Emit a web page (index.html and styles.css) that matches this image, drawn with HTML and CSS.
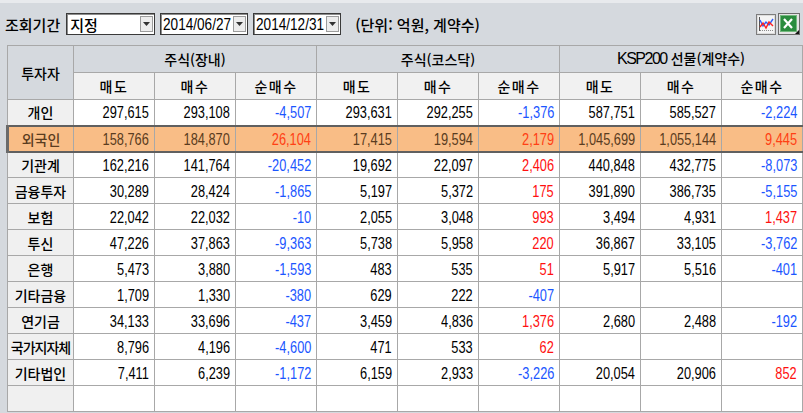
FILE: index.html
```html
<!DOCTYPE html>
<html lang="ko">
<head>
<meta charset="utf-8">
<link rel="stylesheet" href="styles.css">
</head>
<body>
<div class="toolbar">
  <span class="label">조회기간</span>
  <div class="combo sel"><span class="val">지정</span><span class="btn"><svg width="9" height="6" viewBox="0 0 9 6"><path d="M1 1h7L4.5 5z" fill="#333"/></svg></span></div>
  <div class="combo date"><span class="val"><span class="v">2014/06/27</span></span><span class="btn"><svg width="9" height="6" viewBox="0 0 9 6"><path d="M1 1h7L4.5 5z" fill="#333"/></svg></span></div>
  <div class="combo date"><span class="val"><span class="v">2014/12/31</span></span><span class="btn"><svg width="9" height="6" viewBox="0 0 9 6"><path d="M1 1h7L4.5 5z" fill="#333"/></svg></span></div>
  <span class="unit">(단위: 억원, 계약수)</span>
  <div class="icons">
    <span class="icon chart"><svg width="20" height="21" viewBox="0 0 20 21">
      <rect x="0.5" y="0.5" width="19" height="20" fill="#dcdcdc" stroke="#7d7d7d"/>
      <rect x="2" y="2" width="16" height="17" fill="#f4f4f4"/>
      <path d="M3.5 3v14" stroke="#555" stroke-width="1"/>
      <path d="M4 16.5h13" stroke="#8a8a8a" stroke-width="1" stroke-dasharray="1 1"/>
      <path d="M4 6l3 6 3-4 3 3 4-6" fill="none" stroke="#2b5cff" stroke-width="1.4"/>
      <path d="M4 13l3-4 3 5 3-6 4 4" fill="none" stroke="#ff2020" stroke-width="1.4"/>
    </svg></span>
    <span class="icon excel"><svg width="22" height="22" viewBox="0 0 22 22">
      <rect x="0.5" y="0.5" width="21" height="21" fill="#e4e4e4" stroke="#6c6c6c"/>
      <rect x="2.5" y="2.5" width="16" height="16" fill="#2a8c3e" stroke="#73b97e"/>
      <path d="M6 6l8 9M14 6l-8 9" stroke="#fff" stroke-width="2.2"/>
      <path d="M21 17v4h-4z" fill="#111"/>
    </svg></span>
  </div>
</div>
<table class="grid">
  <colgroup><col class="c0"><col><col><col><col><col><col><col><col><col></colgroup>
  <thead>
    <tr class="h1"><th rowspan="2" class="inv">투자자</th><th colspan="3">주식(장내)</th><th colspan="3">주식(코스닥)</th><th colspan="3"><span class="v">KSP200</span> 선물(계약수)</th></tr>
    <tr class="h2"><th>매도</th><th>매수</th><th>순매수</th><th>매도</th><th>매수</th><th>순매수</th><th>매도</th><th>매수</th><th>순매수</th></tr>
  </thead>
  <tbody>
    <tr><th>개인</th><td><span class="v">297,615</span></td><td><span class="v">293,108</span></td><td class="neg"><span class="v">-4,507</span></td><td><span class="v">293,631</span></td><td><span class="v">292,255</span></td><td class="neg"><span class="v">-1,376</span></td><td><span class="v">587,751</span></td><td><span class="v">585,527</span></td><td class="neg"><span class="v">-2,224</span></td></tr>
    <tr class="hl"><th>외국인</th><td><span class="v">158,766</span></td><td><span class="v">184,870</span></td><td class="pos"><span class="v">26,104</span></td><td><span class="v">17,415</span></td><td><span class="v">19,594</span></td><td class="pos"><span class="v">2,179</span></td><td><span class="v">1,045,699</span></td><td><span class="v">1,055,144</span></td><td class="pos"><span class="v">9,445</span></td></tr>
    <tr><th>기관계</th><td><span class="v">162,216</span></td><td><span class="v">141,764</span></td><td class="neg"><span class="v">-20,452</span></td><td><span class="v">19,692</span></td><td><span class="v">22,097</span></td><td class="pos"><span class="v">2,406</span></td><td><span class="v">440,848</span></td><td><span class="v">432,775</span></td><td class="neg"><span class="v">-8,073</span></td></tr>
    <tr><th>금융투자</th><td><span class="v">30,289</span></td><td><span class="v">28,424</span></td><td class="neg"><span class="v">-1,865</span></td><td><span class="v">5,197</span></td><td><span class="v">5,372</span></td><td class="pos"><span class="v">175</span></td><td><span class="v">391,890</span></td><td><span class="v">386,735</span></td><td class="neg"><span class="v">-5,155</span></td></tr>
    <tr><th>보험</th><td><span class="v">22,042</span></td><td><span class="v">22,032</span></td><td class="neg"><span class="v">-10</span></td><td><span class="v">2,055</span></td><td><span class="v">3,048</span></td><td class="pos"><span class="v">993</span></td><td><span class="v">3,494</span></td><td><span class="v">4,931</span></td><td class="pos"><span class="v">1,437</span></td></tr>
    <tr><th>투신</th><td><span class="v">47,226</span></td><td><span class="v">37,863</span></td><td class="neg"><span class="v">-9,363</span></td><td><span class="v">5,738</span></td><td><span class="v">5,958</span></td><td class="pos"><span class="v">220</span></td><td><span class="v">36,867</span></td><td><span class="v">33,105</span></td><td class="neg"><span class="v">-3,762</span></td></tr>
    <tr><th>은행</th><td><span class="v">5,473</span></td><td><span class="v">3,880</span></td><td class="neg"><span class="v">-1,593</span></td><td><span class="v">483</span></td><td><span class="v">535</span></td><td class="pos"><span class="v">51</span></td><td><span class="v">5,917</span></td><td><span class="v">5,516</span></td><td class="neg"><span class="v">-401</span></td></tr>
    <tr><th>기타금융</th><td><span class="v">1,709</span></td><td><span class="v">1,330</span></td><td class="neg"><span class="v">-380</span></td><td><span class="v">629</span></td><td><span class="v">222</span></td><td class="neg"><span class="v">-407</span></td><td></td><td></td><td></td></tr>
    <tr><th>연기금</th><td><span class="v">34,133</span></td><td><span class="v">33,696</span></td><td class="neg"><span class="v">-437</span></td><td><span class="v">3,459</span></td><td><span class="v">4,836</span></td><td class="pos"><span class="v">1,376</span></td><td><span class="v">2,680</span></td><td><span class="v">2,488</span></td><td class="neg"><span class="v">-192</span></td></tr>
    <tr><th class="tight">국가지자체</th><td><span class="v">8,796</span></td><td><span class="v">4,196</span></td><td class="neg"><span class="v">-4,600</span></td><td><span class="v">471</span></td><td><span class="v">533</span></td><td class="pos"><span class="v">62</span></td><td></td><td></td><td></td></tr>
    <tr><th>기타법인</th><td><span class="v">7,411</span></td><td><span class="v">6,239</span></td><td class="neg"><span class="v">-1,172</span></td><td><span class="v">6,159</span></td><td><span class="v">2,933</span></td><td class="neg"><span class="v">-3,226</span></td><td><span class="v">20,054</span></td><td><span class="v">20,906</span></td><td class="pos"><span class="v">852</span></td></tr>
    <tr><th></th><td></td><td></td><td></td><td></td><td></td><td></td><td></td><td></td><td></td></tr>
  </tbody>
</table>
</body>
</html>
```

FILE: styles.css
```css
html, body {
  margin: 0;
  padding: 0;
}
body {
  width: 803px;
  height: 413px;
  overflow: hidden;
  background: #d5d9de;
  font-family: "Noto Sans CJK KR", "Liberation Sans", sans-serif;
  color: #000;
}
.v {
  display: inline-block;
  font-family: "Liberation Sans", sans-serif;
  transform: scaleX(0.8);
  transform-origin: 100% 50%;
}
.toolbar {
  height: 45px;
  box-sizing: border-box;
  padding: 3px 3px 0 5px;
  display: flex;
  align-items: center;
  background: linear-gradient(#e8eaed 0, #e8eaed 3px, #d5d9de 3px);
}
.label {
  font-size: 15px;
  font-weight: 500;
  margin-right: 6px;
  line-height: 1;
}
.combo {
  display: flex;
  flex: none;
  align-items: center;
  height: 22px;
  box-sizing: border-box;
  border: 1px solid #3a3a3a;
  box-shadow: inset 1px 1px 0 #8c8c8c;
  background: #fff;
}
.combo.sel { width: 89px; }
.combo.date { width: 88px; margin-left: 5px; }
.combo .val {
  flex: 1;
  min-width: 0;
  padding-left: 3px;
  font-size: 15px;
  font-weight: 500;
  line-height: 1;
  white-space: nowrap;
}
.combo .val .v {
  font-size: 17px;
  font-weight: normal;
  transform-origin: 0 50%;
  margin-left: -1px;
  margin-right: -17px;
}
.combo .btn {
  flex: none;
  width: 13px;
  height: 16px;
  margin-right: 1px;
  box-sizing: border-box;
  border: 1px solid #9c9c9c;
  background: #ededed;
  display: flex;
  align-items: center;
  justify-content: center;
}
.unit {
  margin-left: 14px;
  font-size: 15px;
  font-weight: 500;
  line-height: 1;
}
.icons {
  margin-left: auto;
  display: flex;
  align-items: center;
  gap: 2px;
}
.icon { display: block; line-height: 0; }

.grid {
  margin-left: 6px;
  border-collapse: collapse;
  table-layout: fixed;
  width: 796px;
  border: 1px solid #8a8a8a;
}
.grid col { width: 81px; }
.grid col.c0 { width: 66px; }
.grid th, .grid td {
  border: 1px solid #a8a8a8;
  padding: 0 5px 0 0;
  overflow: hidden;
  white-space: nowrap;
}
.grid th {
  font-weight: 500;
  font-size: 14px;
  text-align: center;
  padding: 0;
  background: #f0f0f0;
  line-height: 1;
}
.grid th .v {
  font-size: 16px;
  font-weight: normal;
  transform: none;
  letter-spacing: -1.5px;
}
.grid thead tr { height: 27px; }
.grid tbody tr { height: 26px; }
.grid .h1 th {
  background: #d5d9de;
}
.grid .h2 th {
  background: #f1f1f1;
  letter-spacing: 1.5px;
}
.grid th.inv {
  background: #d5d9de;
  letter-spacing: 0;
}
.grid th.tight { letter-spacing: -1px; }
.grid td {
  background: #fff;
  text-align: right;
  font-size: 16px;
  line-height: 1;
}
.grid td.neg { color: #1b56ff; }
.grid td.pos { color: #ff1010; }

.grid tr.hl th,
.grid tr.hl td {
  background: #f9bd86;
  color: #5a3c20;
  border-top: 2px solid #606060;
  border-bottom: 2px solid #606060;
}
.grid tr.hl th { border-left: 3px solid #6a6a6a; }
.grid tr.hl td.pos { color: #ff4014; }
```
